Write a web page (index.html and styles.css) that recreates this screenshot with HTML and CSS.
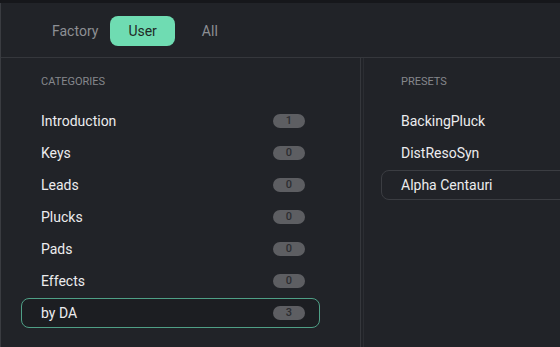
FILE: index.html
```html
<!DOCTYPE html>
<html lang="en">

<head>
    <meta charset="UTF-8">
    <meta name="viewport" content="width=device-width, initial-scale=1.0">
    <title>Preset Browser</title>
    <link rel="stylesheet" href="styles.css">
</head>

<body>
    <div class="browser">
        <div class="tabs">
            <button class="tab">Factory</button>
            <button class="tab active">User</button>
            <button class="tab">All</button>
        </div>

        <div class="columns">
            <div class="column categories">
                <h2 class="column-title">Categories</h2>
                <ul class="list">
                    <li class="row"><span>Introduction</span><span class="badge">1</span></li>
                    <li class="row"><span>Keys</span><span class="badge">0</span></li>
                    <li class="row"><span>Leads</span><span class="badge">0</span></li>
                    <li class="row"><span>Plucks</span><span class="badge">0</span></li>
                    <li class="row"><span>Pads</span><span class="badge">0</span></li>
                    <li class="row"><span>Effects</span><span class="badge">0</span></li>
                    <li class="row selected"><span>by DA</span><span class="badge">3</span></li>
                </ul>
            </div>

            <div class="column presets">
                <h2 class="column-title">Presets</h2>
                <ul class="list">
                    <li class="row">BackingPluck</li>
                    <li class="row">DistResoSyn</li>
                    <li class="row current">Alpha Centauri</li>
                </ul>
            </div>
        </div>
    </div>
</body>

</html>
```

FILE: styles.css
```css
* {
    margin: 0;
    padding: 0;
    box-sizing: border-box;
    font-family: Roboto, 'Liberation Sans', sans-serif;
}

body {
    background: #16171b;
    overflow: hidden;
}

.browser {
    margin-top: 3px;
    height: 344px;
    background: #212328;
    border-left: 1px solid #3a3c41;
}

.tabs {
    height: 55px;
    display: flex;
    align-items: center;
    padding-left: 37px;
    padding-top: 2px;
    border-bottom: 1px solid #35373c;
}

.tab {
    height: 30px;
    padding: 0 14px;
    background: none;
    border: none;
    border-radius: 8px;
    color: #8d8f94;
    font-size: 14px;
    cursor: pointer;
}

.tab.active {
    padding: 0 18px;
    margin: 0 13px 0 -2px;
    background: #6fdcb2;
    color: #1f2a26;
}

.columns {
    display: flex;
    height: 289px;
}

.column {
    padding-top: 17px;
}

.categories {
    width: 360px;
    padding-left: 20px;
    padding-right: 40px;
    border-right: 1px solid #35373c;
}

.presets {
    flex: 1;
    padding-left: 17px;
    border-left: 1px solid #2b2d32;
    margin-left: 2px;
}

.column-title {
    font-size: 11px;
    font-weight: 400;
    text-transform: uppercase;
    color: #85878c;
    height: 14px;
    line-height: 14px;
    padding-left: 20px;
    margin-bottom: 17px;
}

.list {
    list-style: none;
}

.row {
    height: 30px;
    margin-bottom: 2px;
    display: flex;
    align-items: center;
    justify-content: space-between;
    padding: 0 14px 0 19px;
    border: 1px solid transparent;
    border-radius: 8px;
    color: #ececee;
    font-size: 14px;
}

.row.selected {
    border: 1.5px solid #4f9f86;
    background: #1c1e22;
}

.presets .row {
    margin-right: -20px;
}

.row.current {
    border-color: #3b3d42;
}

.badge {
    width: 32px;
    height: 14px;
    border-radius: 7px;
    background: #5d5e62;
    color: #2c2d31;
    font-size: 11px;
    font-weight: 500;
    line-height: 14px;
    text-align: center;
}
```
